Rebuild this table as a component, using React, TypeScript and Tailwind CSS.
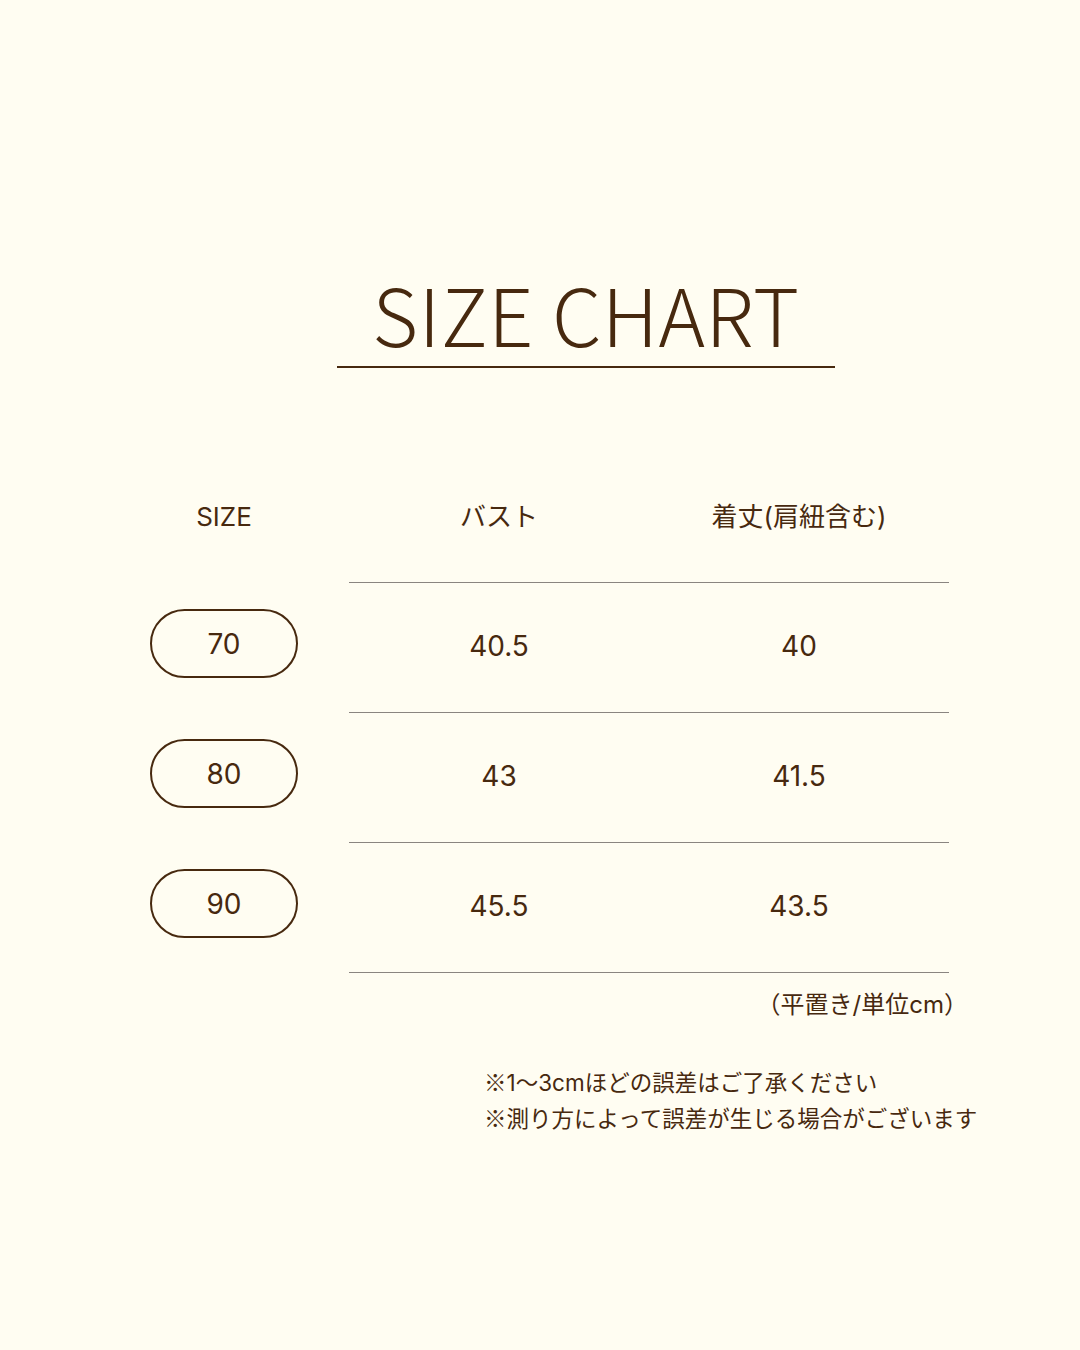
import React from 'react';

const rows = [
  { size: '70', bust: '40.5', length: '40' },
  { size: '80', bust: '43', length: '41.5' },
  { size: '90', bust: '45.5', length: '43.5' },
];

const cjk = { fontFamily: '"Noto Sans CJK JP", "Noto Sans", sans-serif' };

const App = () => {
  return (
    <div
      className="w-[1080px] h-[1350px] bg-[#fffdf2] text-[#47290f] overflow-hidden"
      style={{ fontFamily: 'Inter, "Noto Sans CJK JP", sans-serif' }}
    >
      {/* Title */}
      <div className="pt-[264px] flex flex-col items-center pl-[92px]">
        <h1 className="text-[79px] font-light leading-[98px] tracking-[0.5px]" style={cjk}>
          SIZE CHART
        </h1>
        <div className="mt-[4px] w-[498px] h-[2px] bg-[#47290f]" />
      </div>

      {/* Table */}
      <div className="mt-[82px] pl-[150px]">
        <div className="flex items-center h-[132px] text-[26px]">
          <div className="w-[148px] text-center">SIZE</div>
          <div className="w-[51px]" />
          <div className="w-[300px] text-center">バスト</div>
          <div className="w-[300px] text-center">着丈(肩紐含む)</div>
        </div>
        <div className="flex">
          <div className="w-[199px]" />
          <div className="w-[600px] h-px bg-[#8a8580]" />
        </div>
        {rows.map((r) => (
          <div key={r.size} className="flex">
            <div className="w-[199px] flex items-center pb-[9px]">
              <div className="w-[148px] h-[69px] rounded-full border-2 border-[#47290f] flex items-center justify-center text-[28px]">
                {r.size}
              </div>
            </div>
            <div className="w-[600px] h-[130px] flex items-center border-b border-[#8a8580] text-[28px] pb-[4px]">
              <div className="w-[300px] text-center">{r.bust}</div>
              <div className="w-[300px] text-center">{r.length}</div>
            </div>
          </div>
        ))}
      </div>

      {/* Notes */}
      <div className="w-[968px] text-right text-[24px] leading-[30px] mt-[17px]">（平置き/単位cm）</div>
      <div className="mt-[43px] pl-[484px] text-[22.5px]">
        <p className="h-[36px] leading-[36px] overflow-visible">
          <span style={cjk}>※</span>1〜3cmほどの誤差はご了承ください
        </p>
        <p className="h-[36px] leading-[36px] overflow-visible">
          <span style={cjk}>※</span>測り方によって誤差が生じる場合がございます
        </p>
      </div>
    </div>
  );
};

export default App;
